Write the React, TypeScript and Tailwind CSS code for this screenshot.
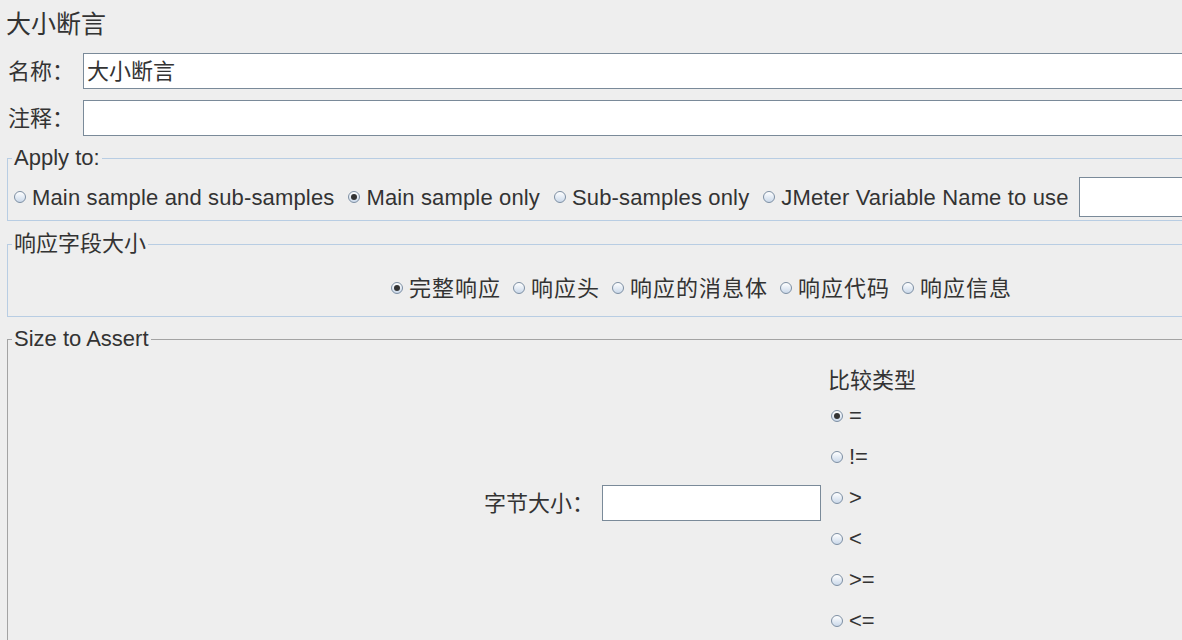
import React from "react"

const font = "font-['Liberation_Sans','Noto_Sans_CJK_SC',sans-serif]"

function Radio({ label, checked = false }: { label: string; checked?: boolean }) {
  return (
    <div className="flex items-center gap-[6px]">
      <span className="flex h-[12px] w-[12px] shrink-0 items-center justify-center rounded-full border border-[#7d8fa3] bg-gradient-to-b from-white to-[#cbd9ea]">
        {checked && <span className="h-[6px] w-[6px] rounded-full bg-[#333]" />}
      </span>
      <span className="whitespace-nowrap">{label}</span>
    </div>
  )
}

function Box({ legend, children, tone = "blue" }: { legend: string; children: React.ReactNode; tone?: "blue" | "gray" }) {
  return (
    <fieldset
      className={`min-w-0 border px-[4px] ${tone === "blue" ? "border-[#b8cde3]" : "border-[#a3a3a3]"}`}
    >
      <legend className="px-[2px] text-[22px] leading-[26px]">{legend}</legend>
      {children}
    </fieldset>
  )
}

const compareOps = ["=", "!=", ">", "<", ">=", "<="]

export default function App() {
  return (
    <div className={`h-[640px] w-[1182px] overflow-hidden bg-[#eeeeee] text-[#333] ${font}`}>
      <div className="w-[1400px]">
        <div className="flex h-[50px] items-center pl-[6px] text-[25px]">大小断言</div>

        <div className="mt-[3px] flex h-[36px] items-center">
          <div className="w-[83px] pl-[8px] text-[22px]">名称：</div>
          <div className="flex h-[36px] flex-1 items-center border border-[#7a8a99] bg-white pl-[3px] text-[22px]">大小断言</div>
        </div>
        <div className="mt-[11px] flex h-[36px] items-center">
          <div className="w-[83px] pl-[8px] text-[22px]">注释：</div>
          <div className="h-[36px] flex-1 border border-[#7a8a99] bg-white" />
        </div>

        <div className="mt-[9px] ml-[7px] flex flex-col">
          <Box legend="Apply to:">
            <div className="mt-[6px] mb-[3px] flex h-[40px] items-center gap-[14px] pl-[2px] text-[22px] tracking-[0.15px]">
              <Radio label="Main sample and sub-samples" />
              <Radio label="Main sample only" checked />
              <Radio label="Sub-samples only" />
              <div className="flex items-center">
                <Radio label="JMeter Variable Name to use" />
                <div className="ml-[10px] h-[40px] w-[200px] border border-[#7a8a99] bg-white" />
              </div>
            </div>
          </Box>

          <div className="mt-[10px]">
            <Box legend="响应字段大小">
              <div className="mt-[16px] mb-[13px] flex h-[30px] items-center gap-[12px] pl-[379px] text-[22px] tracking-[1px]">
                <Radio label="完整响应" checked />
                <Radio label="响应头" />
                <Radio label="响应的消息体" />
                <Radio label="响应代码" />
                <Radio label="响应信息" />
              </div>
            </Box>
          </div>

          <div className="mt-[9px]">
            <Box legend="Size to Assert" tone="gray">
              <div className="flex items-center pl-[472px] pt-[13px] text-[22px]">
                <div className="w-[118px]">字节大小：</div>
                <div className="h-[36px] w-[219px] border border-[#7a8a99] bg-white" />
                <div className="ml-[7px] flex flex-col">
                  <div className="flex h-[30px] items-center">比较类型</div>
                  {compareOps.map((op, i) => (
                    <div key={op} className="flex h-[41px] items-center pl-[3px]">
                      <Radio label={op} checked={i === 0} />
                    </div>
                  ))}
                </div>
              </div>
            </Box>
          </div>
        </div>
      </div>
    </div>
  )
}
